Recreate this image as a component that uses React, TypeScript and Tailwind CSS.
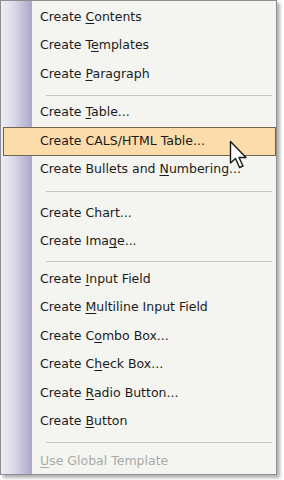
import React from "react";

type Item =
  | { pre: string; key?: string; post?: string; disabled?: boolean; active?: boolean }
  | { sep: string };

const items: Item[] = [
  { pre: "Create ", key: "C", post: "ontents" },
  { pre: "Create T", key: "e", post: "mplates" },
  { pre: "Create ", key: "P", post: "aragraph" },
  { sep: "h-[10px] pt-[3px]" },
  { pre: "Create ", key: "T", post: "able..." },
  { pre: "Create CALS/HTML Table...", active: true },
  { pre: "Create Bullets and ", key: "N", post: "umbering..." },
  { sep: "h-[15px]" },
  { pre: "Create Chart..." },
  { pre: "Create Ima", key: "g", post: "e..." },
  { sep: "h-[9px] pt-[2px]" },
  { pre: "Create ", key: "I", post: "nput Field" },
  { pre: "Create ", key: "M", post: "ultiline Input Field" },
  { pre: "Create C", key: "o", post: "mbo Box..." },
  { pre: "Create C", key: "h", post: "eck Box..." },
  { pre: "Create ", key: "R", post: "adio Button..." },
  { pre: "Create ", key: "B", post: "utton" },
  { sep: "h-[11px] pt-[2px]" },
  { pre: "", key: "U", post: "se Global Template", disabled: true },
];

function Cursor() {
  return (
    <svg
      className="absolute left-[229px] top-[140px]"
      width="22"
      height="32"
      viewBox="0 0 22 32"
    >
      <path
        d="M1.5 1.5 L1.5 23 L6.5 18.5 L10.5 27.5 L14 26 L10 17.5 L17 17.5 Z"
        fill="#ffffff"
        stroke="#1a1a1a"
        strokeWidth="1.4"
        strokeLinejoin="round"
      />
    </svg>
  );
}

export default function App() {
  return (
    <div className="relative w-[284px] h-[480px] bg-white overflow-hidden font-['DejaVu_Sans',sans-serif]">
      <div className="relative w-[277px] h-[475px] border border-[#8d8d8d] shadow-[3px_3px_3px_rgba(0,0,0,0.3)] pt-[2px] bg-[linear-gradient(to_right,#eeeef5_0px,#dcdbe9_12px,#aba7cb_31px,#f4f5f1_31px)]">
        {items.map((it, i) =>
          "sep" in it ? (
            <div key={i} className={"flex items-center pl-[45px] pr-[4px] " + it.sep}>
              <div className="h-px w-full bg-[#c6c6c3]" />
            </div>
          ) : (
            <div
              key={i}
              className={
                "h-[28.5px] flex items-center text-[12.5px] " +
                (it.active
                  ? "ml-[2px] mr-0 pl-[36px] border border-[#6f6350] bg-[#fbdcaa] text-[#1b1b1b]"
                  : "pl-[39px] " + (it.disabled ? "text-[#a9a9a6]" : "text-[#1b1b1b]"))
              }
            >
              <span className="whitespace-pre">
                {it.pre}
                {it.key && <u className="underline-offset-2">{it.key}</u>}
                {it.post}
              </span>
            </div>
          )
        )}
      </div>
      <Cursor />
    </div>
  );
}
